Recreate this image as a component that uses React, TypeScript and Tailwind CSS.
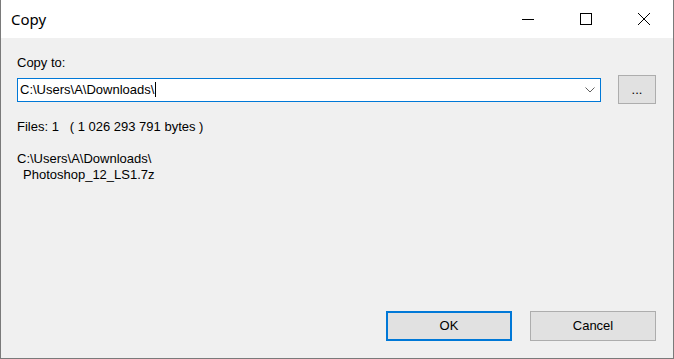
import React from "react";

export default function App() {
  return (
    <div className="w-[674px] h-[359px] flex flex-col border-l border-r border-b border-[#7a7a7a] bg-white overflow-hidden">
      {/* Title bar */}
      <div className="h-[38px] flex items-center bg-white shrink-0">
        <div
          className="pl-[10px] flex-1 text-[15px] text-black leading-none"
          style={{ fontFamily: '"Noto Sans", "Open Sans", sans-serif' }}
        >
          Copy
        </div>
        <div className="flex h-full">
          <div className="w-[58px] h-full flex items-center justify-center">
            <svg width="12" height="12" viewBox="0 0 12 12">
              <line x1="0" y1="6.5" x2="12" y2="6.5" stroke="#000" strokeWidth="1" />
            </svg>
          </div>
          <div className="w-[58px] h-full flex items-center justify-center">
            <svg width="12" height="12" viewBox="0 0 12 12">
              <rect x="0.5" y="0.5" width="11" height="11" fill="none" stroke="#000" strokeWidth="1" />
            </svg>
          </div>
          <div className="w-[58px] h-full flex items-center justify-center">
            <svg width="12" height="12" viewBox="0 0 12 12">
              <path d="M0 0 L12 12 M12 0 L0 12" stroke="#000" strokeWidth="1" />
            </svg>
          </div>
        </div>
      </div>

      {/* Body */}
      <div
        className="flex-1 flex flex-col bg-[#f0f0f0] pl-[16px] pr-[17px] pt-[16px] pb-[17px] text-[13px] text-black"
        style={{ fontFamily: '"Liberation Sans", Arial, sans-serif' }}
      >
        <div className="leading-[17px]">Copy to:</div>
        <div className="mt-[4px] flex items-center gap-[17px] h-[29px]">
          <div className="w-[584px] h-[24px] border border-[#0078d7] bg-white flex items-center pl-[2px] pr-[5px]">
            <div className="flex-1 flex items-center">
              <span className="leading-[17px]">C:\Users\A\Downloads\</span>
              <span className="w-px h-[15px] bg-black ml-[1px]" />
            </div>
            <svg width="10" height="6" viewBox="0 0 10 6">
              <path d="M0.5 0.5 L5 5 L9.5 0.5" fill="none" stroke="#606060" strokeWidth="1" />
            </svg>
          </div>
          <div className="w-[38px] h-[29px] border border-[#adadad] bg-[#e1e1e1] flex items-center justify-center leading-none">
            ...
          </div>
        </div>
        <div className="mt-[14px] leading-[17px] whitespace-pre">Files: 1   ( 1 026 293 791 bytes )</div>
        <div className="mt-[16px] leading-[16px]">C:\Users\A\Downloads\</div>
        <div className="leading-[16px] pl-[6px]">Photoshop_12_LS1.7z</div>

        <div className="mt-auto flex justify-end gap-[18px]">
          <div className="w-[126px] h-[30px] border-2 border-[#0078d7] bg-[#e1e1e1] flex items-center justify-center">
            OK
          </div>
          <div className="w-[126px] h-[30px] border border-[#adadad] bg-[#e1e1e1] flex items-center justify-center">
            Cancel
          </div>
        </div>
      </div>
    </div>
  );
}
